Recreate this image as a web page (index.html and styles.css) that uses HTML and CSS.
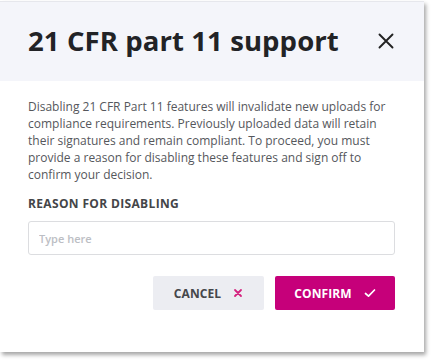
FILE: index.html
```html
<!DOCTYPE html>
<html>
<head>
<meta charset="utf-8">
<link rel="stylesheet" href="styles.css">
</head>
<body>
<div class="dialog">
  <div class="header">
    <h1 class="title">21 CFR part 11 support</h1>
    <button class="close" aria-label="Close">
      <svg width="16" height="16" viewBox="0 0 16 16"><path d="M1.5 1.5L14.5 14.5M14.5 1.5L1.5 14.5" stroke="#222" stroke-width="1.9" stroke-linecap="round"/></svg>
    </button>
  </div>
  <div class="content">
    <p class="desc">Disabling 21 CFR Part 11 features will invalidate new uploads for compliance requirements. Previously uploaded data will retain their signatures and remain compliant. To proceed, you must provide a reason for disabling these features and sign off to confirm your decision.</p>
    <label class="label" for="reason">REASON FOR DISABLING</label>
    <input id="reason" class="input" type="text" placeholder="Type here">
    <div class="actions">
      <button class="btn btn-cancel">CANCEL
        <svg width="10" height="10" viewBox="0 0 10 10"><path d="M2 2L8 8M8 2L2 8" stroke="#d4237f" stroke-width="1.8" stroke-linecap="round"/></svg>
      </button>
      <button class="btn btn-confirm">CONFIRM
        <svg width="12" height="10" viewBox="0 0 12 10"><path d="M1.5 5.5L4.5 8.2L10.5 2" fill="none" stroke="#fff" stroke-width="1.7" stroke-linecap="round" stroke-linejoin="round"/></svg>
      </button>
    </div>
  </div>
</div>
</body>
</html>
```
FILE: styles.css
```css
html, body {
  margin: 0;
  padding: 0;
  background: #ffffff;
}
body {
  font-family: "Open Sans", "Liberation Sans", sans-serif;
  width: 432px;
  height: 360px;
  overflow: hidden;
}
.dialog {
  width: 424px;
  height: 350px;
  margin-top: 1px;
  background: #fff;
  box-shadow: 2px 3px 4px rgba(0,0,0,0.35);
  border-top: 1px solid #e6e7ec;
  display: flex;
  flex-direction: column;
}
.header {
  height: 79px;
  background: #f4f5fa;
  display: flex;
  align-items: center;
  justify-content: space-between;
  padding: 0 30px 2px 28px;
  box-sizing: border-box;
}
.title {
  margin: 0;
  font-size: 27.5px;
  font-weight: 700;
  color: #222326;
  letter-spacing: 0.1px;
}
.close {
  background: none;
  border: 0;
  padding: 0;
  width: 16px;
  height: 16px;
  display: flex;
}
.content {
  padding: 17px 29px 0 28px;
  display: flex;
  flex-direction: column;
}
.desc {
  margin: 0;
  font-size: 12px;
  line-height: 17px;
  color: #55575c;
}
.label {
  margin-top: 13px;
  font-size: 12px;
  font-weight: 700;
  color: #444548;
  line-height: 16px;
  letter-spacing: 0.35px;
}
.input {
  margin-top: 9px;
  height: 34px;
  box-sizing: border-box;
  border: 1px solid #dcdde0;
  border-radius: 3px;
  padding: 0 10px;
  font-family: "Open Sans", "Liberation Sans", sans-serif;
  font-size: 11px;
  font-weight: 600;
  outline: none;
}
.input::placeholder {
  color: #bcbec4;
}
.actions {
  margin-top: 21px;
  display: flex;
  justify-content: flex-end;
  gap: 11px;
}
.btn {
  height: 34px;
  border: 0;
  border-radius: 2px;
  font-family: "Open Sans", "Liberation Sans", sans-serif;
  font-size: 12px;
  font-weight: 700;
  letter-spacing: 0.1px;
  display: flex;
  align-items: center;
  justify-content: center;
  gap: 12px;
}
.btn-cancel {
  width: 111px;
  background: #ecedf2;
  color: #45464a;
}
.btn-confirm {
  width: 120px;
  background: #c6007a;
  color: #ffffff;
}
```
